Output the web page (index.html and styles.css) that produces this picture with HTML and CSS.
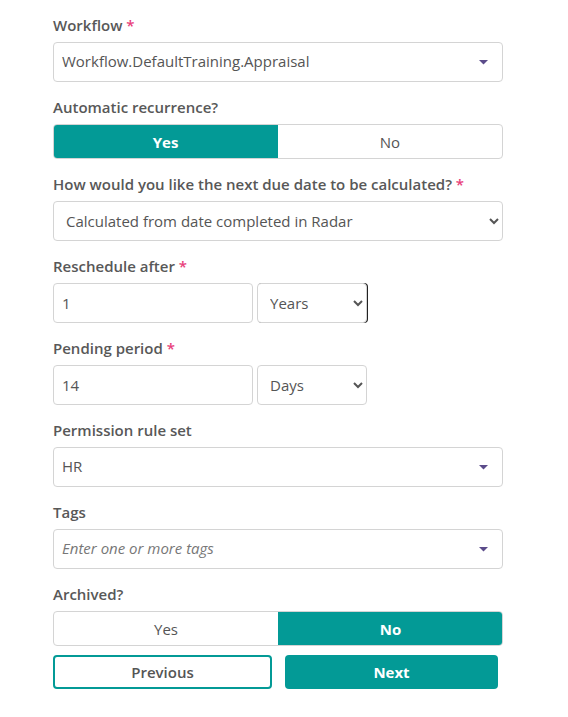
FILE: index.html
```html
<!DOCTYPE html>
<html lang="en">
<head>
<meta charset="utf-8">
<title>Recurrence</title>
<link rel="stylesheet" href="styles.css">
</head>
<body>
<form class="form">
  <div class="group">
    <label class="label">Workflow <span class="req">*</span></label>
    <div class="box picker">
      <span class="value">Workflow.DefaultTraining.Appraisal</span>
      <svg class="caret" width="9" height="5" viewBox="0 0 9 5"><path d="M0 0h9L4.5 4.5z"/></svg>
    </div>
  </div>
  <div class="group">
    <label class="label">Automatic recurrence?</label>
    <div class="toggle">
      <span class="opt on">Yes</span>
      <span class="opt">No</span>
    </div>
  </div>
  <div class="group">
    <label class="label">How would you like the next due date to be calculated? <span class="req">*</span></label>
    <select class="box native full"><option>Calculated from date completed in Radar</option></select>
  </div>
  <div class="group">
    <label class="label">Reschedule after <span class="req">*</span></label>
    <div class="pair">
      <input class="box num" value="1">
      <select class="box native unit focus"><option>Years</option></select>
    </div>
  </div>
  <div class="group">
    <label class="label">Pending period <span class="req">*</span></label>
    <div class="pair">
      <input class="box num" value="14">
      <select class="box native unit"><option>Days</option></select>
    </div>
  </div>
  <div class="group">
    <label class="label">Permission rule set</label>
    <div class="box picker">
      <span class="value">HR</span>
      <svg class="caret" width="9" height="5" viewBox="0 0 9 5"><path d="M0 0h9L4.5 4.5z"/></svg>
    </div>
  </div>
  <div class="group">
    <label class="label">Tags</label>
    <div class="box picker">
      <span class="value placeholder">Enter one or more tags</span>
      <svg class="caret" width="9" height="5" viewBox="0 0 9 5"><path d="M0 0h9L4.5 4.5z"/></svg>
    </div>
  </div>
  <div class="group last">
    <label class="label">Archived?</label>
    <div class="toggle">
      <span class="opt">Yes</span>
      <span class="opt on">No</span>
    </div>
  </div>
  <div class="actions">
    <button type="button" class="btn outline">Previous</button>
    <button type="button" class="btn solid">Next</button>
  </div>
</form>
</body>
</html>
```

FILE: styles.css
```css
* { box-sizing: border-box; }
html, body { margin: 0; background: #fff; }
body {
  font-family: "Open Sans", "Liberation Sans", sans-serif;
  color: #555;
  font-size: 15px;
}
.form {
  width: 450px;
  margin-left: 53px;
  padding-top: 14px;
}
.group { margin-bottom: 14px; }
.group.last { margin-bottom: 9px; }
.label {
  display: block;
  font-weight: 600;
  font-size: 15px;
  line-height: 22px;
  margin-bottom: 6px;
  color: #585858;
}
.req { color: #e8407a; }
.box {
  height: 40px;
  border: 1px solid #d4d4d4;
  border-radius: 4px;
  background: #fff;
  font-family: "Open Sans", "Liberation Sans", sans-serif;
  font-size: 15px;
  color: #555;
}
.picker {
  display: flex;
  align-items: center;
  justify-content: space-between;
  padding: 0 14px 2px 8px;
}
.placeholder { font-style: italic; color: #777; }
.caret { fill: #5b4b8a; display: block; margin-top: 2px; }
.native {
  padding: 0 6px 0 8px;
  margin: 0;
}
.full { width: 100%; }
.pair { display: flex; gap: 4px; align-items: center; }
.num { width: 200px; padding: 0 8px; margin: 0; outline: none; }
.unit { width: 110px; padding-left: 8px; }
.focus { box-shadow: 1px 0 0 #222; }
.toggle {
  display: grid;
  grid-template-columns: 1fr 1fr;
  height: 35px;
  border: 1px solid #d4d4d4;
  border-radius: 4px;
  overflow: hidden;
}
.opt {
  display: flex;
  align-items: center;
  justify-content: center;
  font-weight: 500;
  color: #555;
}
.opt.on {
  background: #039a96;
  color: #fff;
  font-weight: 700;
  margin: -1px;
}
.opt.on:first-child { margin-right: 0; }
.opt.on:last-child { margin-left: 0; }
.actions {
  display: grid;
  grid-template-columns: 219px 213px;
  column-gap: 13px;
}
.btn {
  height: 34px;
  border-radius: 4px;
  font-family: "Open Sans", "Liberation Sans", sans-serif;
  font-size: 15px;
  padding: 0;
}
.outline {
  background: #fff;
  border: 2px solid #039a96;
  color: #555;
  font-weight: 600;
}
.solid {
  background: #039a96;
  border: 0;
  color: #fff;
  font-weight: 700;
}
```
